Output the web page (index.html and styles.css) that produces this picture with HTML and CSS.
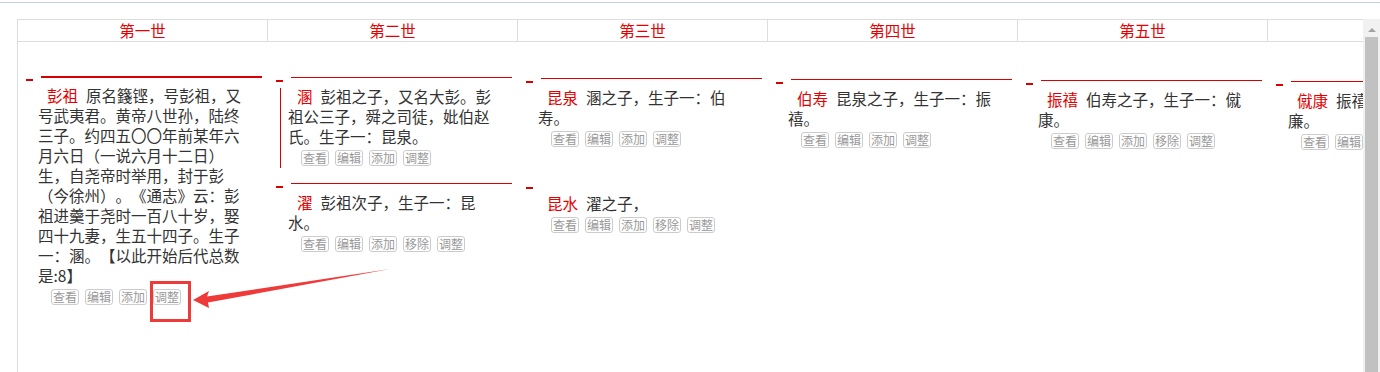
FILE: index.html
```html
<!DOCTYPE html>
<html>
<head>
  <title>世系图</title>
  <link rel="stylesheet" href="styles.css">
</head>
<body>
  <div class="page">
    <div class="topline"></div>
    <div class="frame">
      <div class="viewport">
        <div class="heads">
          <div class="head">第一世</div>
          <div class="head">第二世</div>
          <div class="head">第三世</div>
          <div class="head">第四世</div>
          <div class="head">第五世</div>
          <div class="head">第六世</div>
        </div>

        <div class="tree">
          <div class="branch">
            <div class="card root">
              <div class="rule"></div>
              <div class="dash"></div>
              <div class="text"><span class="name">彭祖</span>原名籛铿，号彭祖，又号武夷君。黄帝八世孙，陆终三子。约四五〇〇年前某年六月六日（一说六月十二日）生，自尧帝时举用，封于彭（今徐州）。《通志》云：彭祖进羹于尧时一百八十岁，娶四十九妻，生五十四子。生子一：溷。【以此开始后代总数是:8】</div>
              <div class="ops">
                <button class="op">查看</button>
                <button class="op">编辑</button>
                <button class="op">添加</button>
                <button class="op">调整</button>
              </div>
            </div>
            <div class="kids">
              <div class="branch">
                <div class="card stem">
                  <div class="rule"></div>
                  <div class="dash"></div>
                  <div class="text"><span class="name">溷</span>彭祖之子，又名大彭。彭祖公三子，舜之司徒，妣伯赵氏。生子一：昆泉。</div>
                  <div class="ops">
                    <button class="op">查看</button>
                    <button class="op">编辑</button>
                    <button class="op">添加</button>
                    <button class="op">调整</button>
                  </div>
                </div>
                <div class="kids">
                  <div class="branch">
                    <div class="card">
                      <div class="rule"></div>
                      <div class="dash"></div>
                      <div class="text"><span class="name">昆泉</span>溷之子，生子一：伯寿。</div>
                      <div class="ops">
                        <button class="op">查看</button>
                        <button class="op">编辑</button>
                        <button class="op">添加</button>
                        <button class="op">调整</button>
                      </div>
                    </div>
                    <div class="kids">
                      <div class="branch">
                        <div class="card">
                          <div class="rule"></div>
                          <div class="dash"></div>
                          <div class="text"><span class="name">伯寿</span>昆泉之子，生子一：振禧。</div>
                          <div class="ops">
                            <button class="op">查看</button>
                            <button class="op">编辑</button>
                            <button class="op">添加</button>
                            <button class="op">调整</button>
                          </div>
                        </div>
                        <div class="kids">
                          <div class="branch">
                            <div class="card">
                              <div class="rule"></div>
                              <div class="dash"></div>
                              <div class="text"><span class="name">振禧</span>伯寿之子，生子一：僦康。</div>
                              <div class="ops">
                                <button class="op">查看</button>
                                <button class="op">编辑</button>
                                <button class="op">添加</button>
                                <button class="op">移除</button>
                                <button class="op">调整</button>
                              </div>
                            </div>
                            <div class="kids">
                              <div class="branch">
                                <div class="card">
                                  <div class="rule"></div>
                                  <div class="dash"></div>
                                  <div class="text"><span class="name">僦康</span>振禧之子，生子一：孝廉。</div>
                                  <div class="ops">
                                    <button class="op">查看</button>
                                    <button class="op">编辑</button>
                                    <button class="op">添加</button>
                                    <button class="op">移除</button>
                                    <button class="op">调整</button>
                                  </div>
                                </div>
                              </div>
                            </div>
                          </div>
                        </div>
                      </div>
                    </div>
                  </div>
                </div>
              </div>

              <div class="branch">
                <div class="card">
                  <div class="rule"></div>
                  <div class="dash"></div>
                  <div class="text"><span class="name">濯</span>彭祖次子，生子一：昆水。</div>
                  <div class="ops">
                    <button class="op">查看</button>
                    <button class="op">编辑</button>
                    <button class="op">添加</button>
                    <button class="op">移除</button>
                    <button class="op">调整</button>
                  </div>
                </div>
                <div class="kids">
                  <div class="branch">
                    <div class="card">
                      <div class="dash"></div>
                      <div class="text"><span class="name">昆水</span>濯之子，</div>
                      <div class="ops">
                        <button class="op">查看</button>
                        <button class="op">编辑</button>
                        <button class="op">添加</button>
                        <button class="op">移除</button>
                        <button class="op">调整</button>
                      </div>
                    </div>
                  </div>
                </div>
              </div>
            </div>
          </div>
        </div>
      </div>

      <div class="scrollbar">
        <div class="sb-up"></div>
        <div class="sb-thumb"></div>
      </div>
    </div>

    <!-- annotation over the screenshot -->
    <div class="mark"></div>
    <svg class="arrow" width="202" height="46" viewBox="0 0 202 46">
      <polygon points="3,36 19,27 17,32.5 200,5 18,38.5 19,44" fill="#ef3a3a"/>
    </svg>
  </div>
</body>
</html>
```

FILE: styles.css
```css
html, body {
  margin: 0;
  height: 100%;
  overflow: hidden;
  background: #fff;
}

body {
  font-family: "Noto Sans CJK SC", "Noto Sans", sans-serif;
  color: #333;
  text-spacing-trim: space-all;
}

.page {
  position: relative;
  height: 100%;
}

.topline {
  height: 1px;
  margin-top: 2px;
  background: #c3d1de;
}

/* Frame with header row and fake scrollbar */
.frame {
  display: flex;
  height: 360px;
  margin: 16px 0 0 17px;
}

.viewport {
  flex: 1;
  min-width: 0;
  overflow: hidden;
  border-left: 1px solid #ddd;
}

.heads {
  display: flex;
  border-top: 1px solid #ddd;
  border-bottom: 1px solid #ddd;
}

.head {
  flex: none;
  width: 250px;
  box-sizing: border-box;
  height: 21px;
  line-height: 21px;
  border-right: 1px solid #ddd;
  text-align: center;
  font-size: 15.5px;
  color: #e60000;
}

/* Tree */
.tree {
  padding-top: 34px;
  margin-left: -1px;
}

.branch {
  display: flex;
}

.kids {
  margin-top: 1px;
}

.card {
  position: relative;
  flex: none;
  width: 250px;
  box-sizing: border-box;
  padding: 9px 19px 2px 21px;
  margin-bottom: 15px;
}

.rule {
  position: absolute;
  top: 0;
  left: 24px;
  width: 221px;
  height: 1px;
  background: #d80000;
}

.root .rule {
  height: 2px;
}

.dash {
  position: absolute;
  top: 3px;
  left: 9px;
  width: 7px;
  height: 2px;
  background: #d80000;
}

/* vertical line linking to next sibling */
.stem::after {
  content: "";
  position: absolute;
  left: 13px;
  top: 11px;
  bottom: 0;
  width: 1px;
  background: #d80000;
}

.text {
  width: 210px;
  font-size: 15.5px;
  line-height: 20px;
}

.name {
  margin: 0 8px 0 9px;
  color: #e60000;
}

.ops {
  display: flex;
  gap: 6px;
  margin-top: 4px;
  padding-left: 13px;
}

.op {
  height: 16px;
  box-sizing: border-box;
  padding: 0 1px;
  border: 1px solid #ccc;
  border-radius: 3px;
  background: #fff;
  color: #999;
  font-family: inherit;
  font-size: 12px;
  line-height: 14px;
}

/* Scrollbar */
.scrollbar {
  flex: none;
  width: 17px;
  display: flex;
  flex-direction: column;
  align-items: center;
  background: #f1f1f1;
}

.sb-up {
  width: 0;
  height: 0;
  margin: 9px 0 5px;
  border-left: 4px solid transparent;
  border-right: 4px solid transparent;
  border-bottom: 4px solid #a3a3a3;
}

.sb-thumb {
  flex: 1;
  width: 13px;
  background: #c1c1c1;
}

/* Annotation */
.mark {
  position: absolute;
  left: 150px;
  top: 279px;
  width: 41px;
  height: 41px;
  box-sizing: border-box;
  border: 3px solid #ef3a3a;
}

.arrow {
  position: absolute;
  left: 190px;
  top: 262px;
}
```
